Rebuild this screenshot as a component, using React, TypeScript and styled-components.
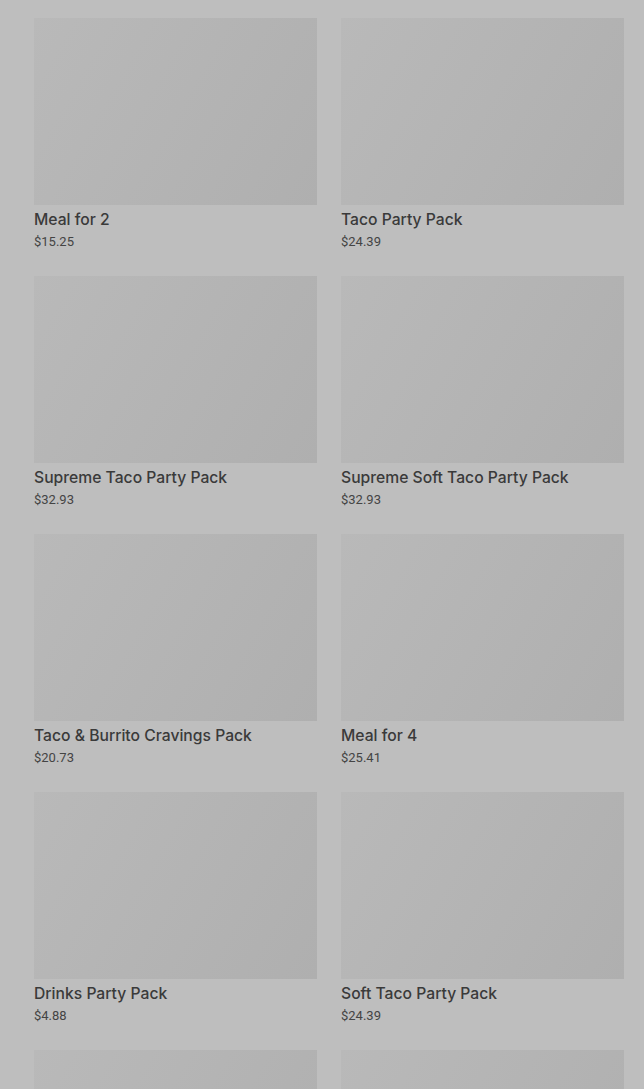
import React from 'react'
import styled, { createGlobalStyle } from 'styled-components'

const GlobalStyle = createGlobalStyle`
    html, body {
        margin: 0;
        padding: 0;
        background: #bebebe;
        font-family: Roboto, "Liberation Sans", sans-serif;
    }
`

const Page = styled.div`
    padding: 18px 20px 0 34px;
    box-sizing: border-box;
    width: 644px;
    height: 1089px;
    overflow: hidden;
`

const Grid = styled.div`
    display: grid;
    grid-template-columns: 283px 283px;
    column-gap: 24px;
    row-gap: 25px;
`

const Card = styled.div`
    display: flex;
    flex-direction: column;
`

const Picture = styled.div`
    height: 187px;
    background: linear-gradient(120deg, #b9b9b9 0%, #b4b4b4 50%, #afafaf 100%);
`

const Title = styled.div`
    margin-top: 5px;
    font-family: Inter, Roboto, sans-serif;
    font-size: 15.7px;
    line-height: 20px;
    font-weight: 500;
    color: #3a3a3a;
`

const Price = styled.div`
    margin-top: 3px;
    font-size: 13px;
    line-height: 18px;
    color: #444444;
`

type Pack = { name?: string, price?: string }

const packs: Pack[] = [
    { name: 'Meal for 2', price: '$15.25' },
    { name: 'Taco Party Pack', price: '$24.39' },
    { name: 'Supreme Taco Party Pack', price: '$32.93' },
    { name: 'Supreme Soft Taco Party Pack', price: '$32.93' },
    { name: 'Taco & Burrito Cravings Pack', price: '$20.73' },
    { name: 'Meal for 4', price: '$25.41' },
    { name: 'Drinks Party Pack', price: '$4.88' },
    { name: 'Soft Taco Party Pack', price: '$24.39' },
    {},
    {},
]

export default function App() {
    return (
        <Page>
            <GlobalStyle />
            <Grid>
                {packs.map((p, i) => (
                    <Card key={i}>
                        <Picture />
                        {p.name && <Title>{p.name}</Title>}
                        {p.price && <Price>{p.price}</Price>}
                    </Card>
                ))}
            </Grid>
        </Page>
    )
}
